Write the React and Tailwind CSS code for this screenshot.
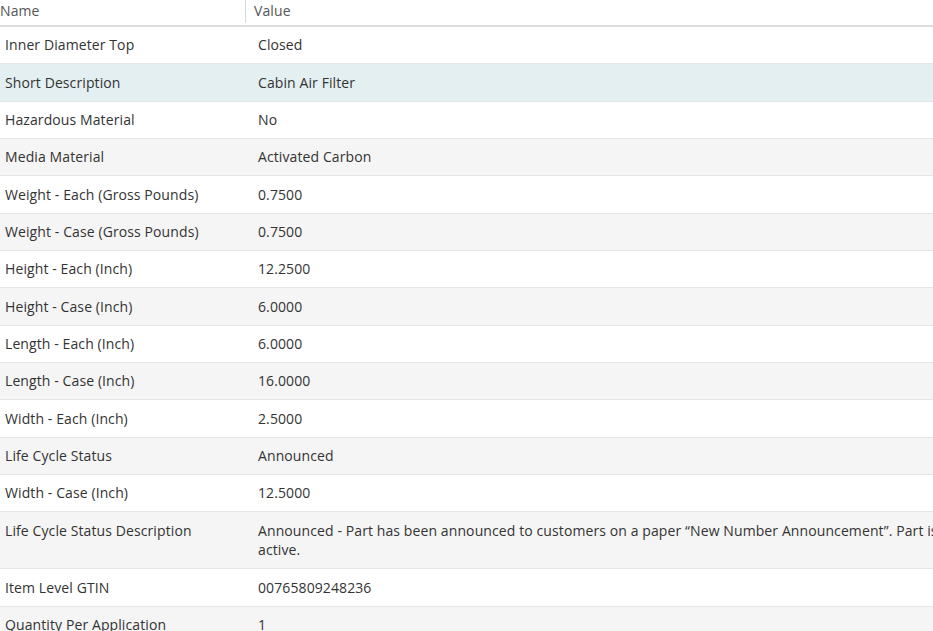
const rows = [
  ['Inner Diameter Top', 'Closed'],
  ['Short Description', 'Cabin Air Filter'],
  ['Hazardous Material', 'No'],
  ['Media Material', 'Activated Carbon'],
  ['Weight - Each (Gross Pounds)', '0.7500'],
  ['Weight - Case (Gross Pounds)', '0.7500'],
  ['Height - Each (Inch)', '12.2500'],
  ['Height - Case (Inch)', '6.0000'],
  ['Length - Each (Inch)', '6.0000'],
  ['Length - Case (Inch)', '16.0000'],
  ['Width - Each (Inch)', '2.5000'],
  ['Life Cycle Status', 'Announced'],
  ['Width - Case (Inch)', '12.5000'],
  ['Life Cycle Status Description', 'Announced - Part has been announced to customers on a paper \u201cNew Number Announcement\u201d. Part is active.'],
  ['Item Level GTIN', '00765809248236'],
  ['Quantity Per Application', '1'],
];

const App = () => {
  return (
    <div className="w-[933px] h-[631px] overflow-hidden bg-white text-[14px] text-[#333] tracking-[0.1px]" style={{ fontFamily: '"Open Sans", "Noto Sans", sans-serif' }}>
      <div className="w-[970px]">
        {/* cabecera */}
        <div className="flex h-[27px] border-b-2 border-[#dcdcdc] text-[#555]">
          <div className="w-[246px] border-r border-[#d8d8d8] leading-[22px] mb-[2px]">Name</div>
          <div className="flex-1 pl-[8px] leading-[22px]">Value</div>
        </div>

        {rows.map(([name, value], i) => {
          let bg = i % 2 === 0 ? 'bg-white' : 'bg-[#f5f5f5]';
          if (i === 1) bg = 'bg-[#e3eff1]';
          return (
            <div key={i} className={`flex border-b border-[#e6e6e6] ${bg}`}>
              <div className="w-[246px] shrink-0 pl-[5px] py-[8.33px] leading-[19.67px]">{name}</div>
              <div className="flex-1 pl-[12px] pr-[8px] py-[8.33px] leading-[19.67px]">{value}</div>
            </div>
          );
        })}
      </div>
    </div>
  );
};

export default App;
